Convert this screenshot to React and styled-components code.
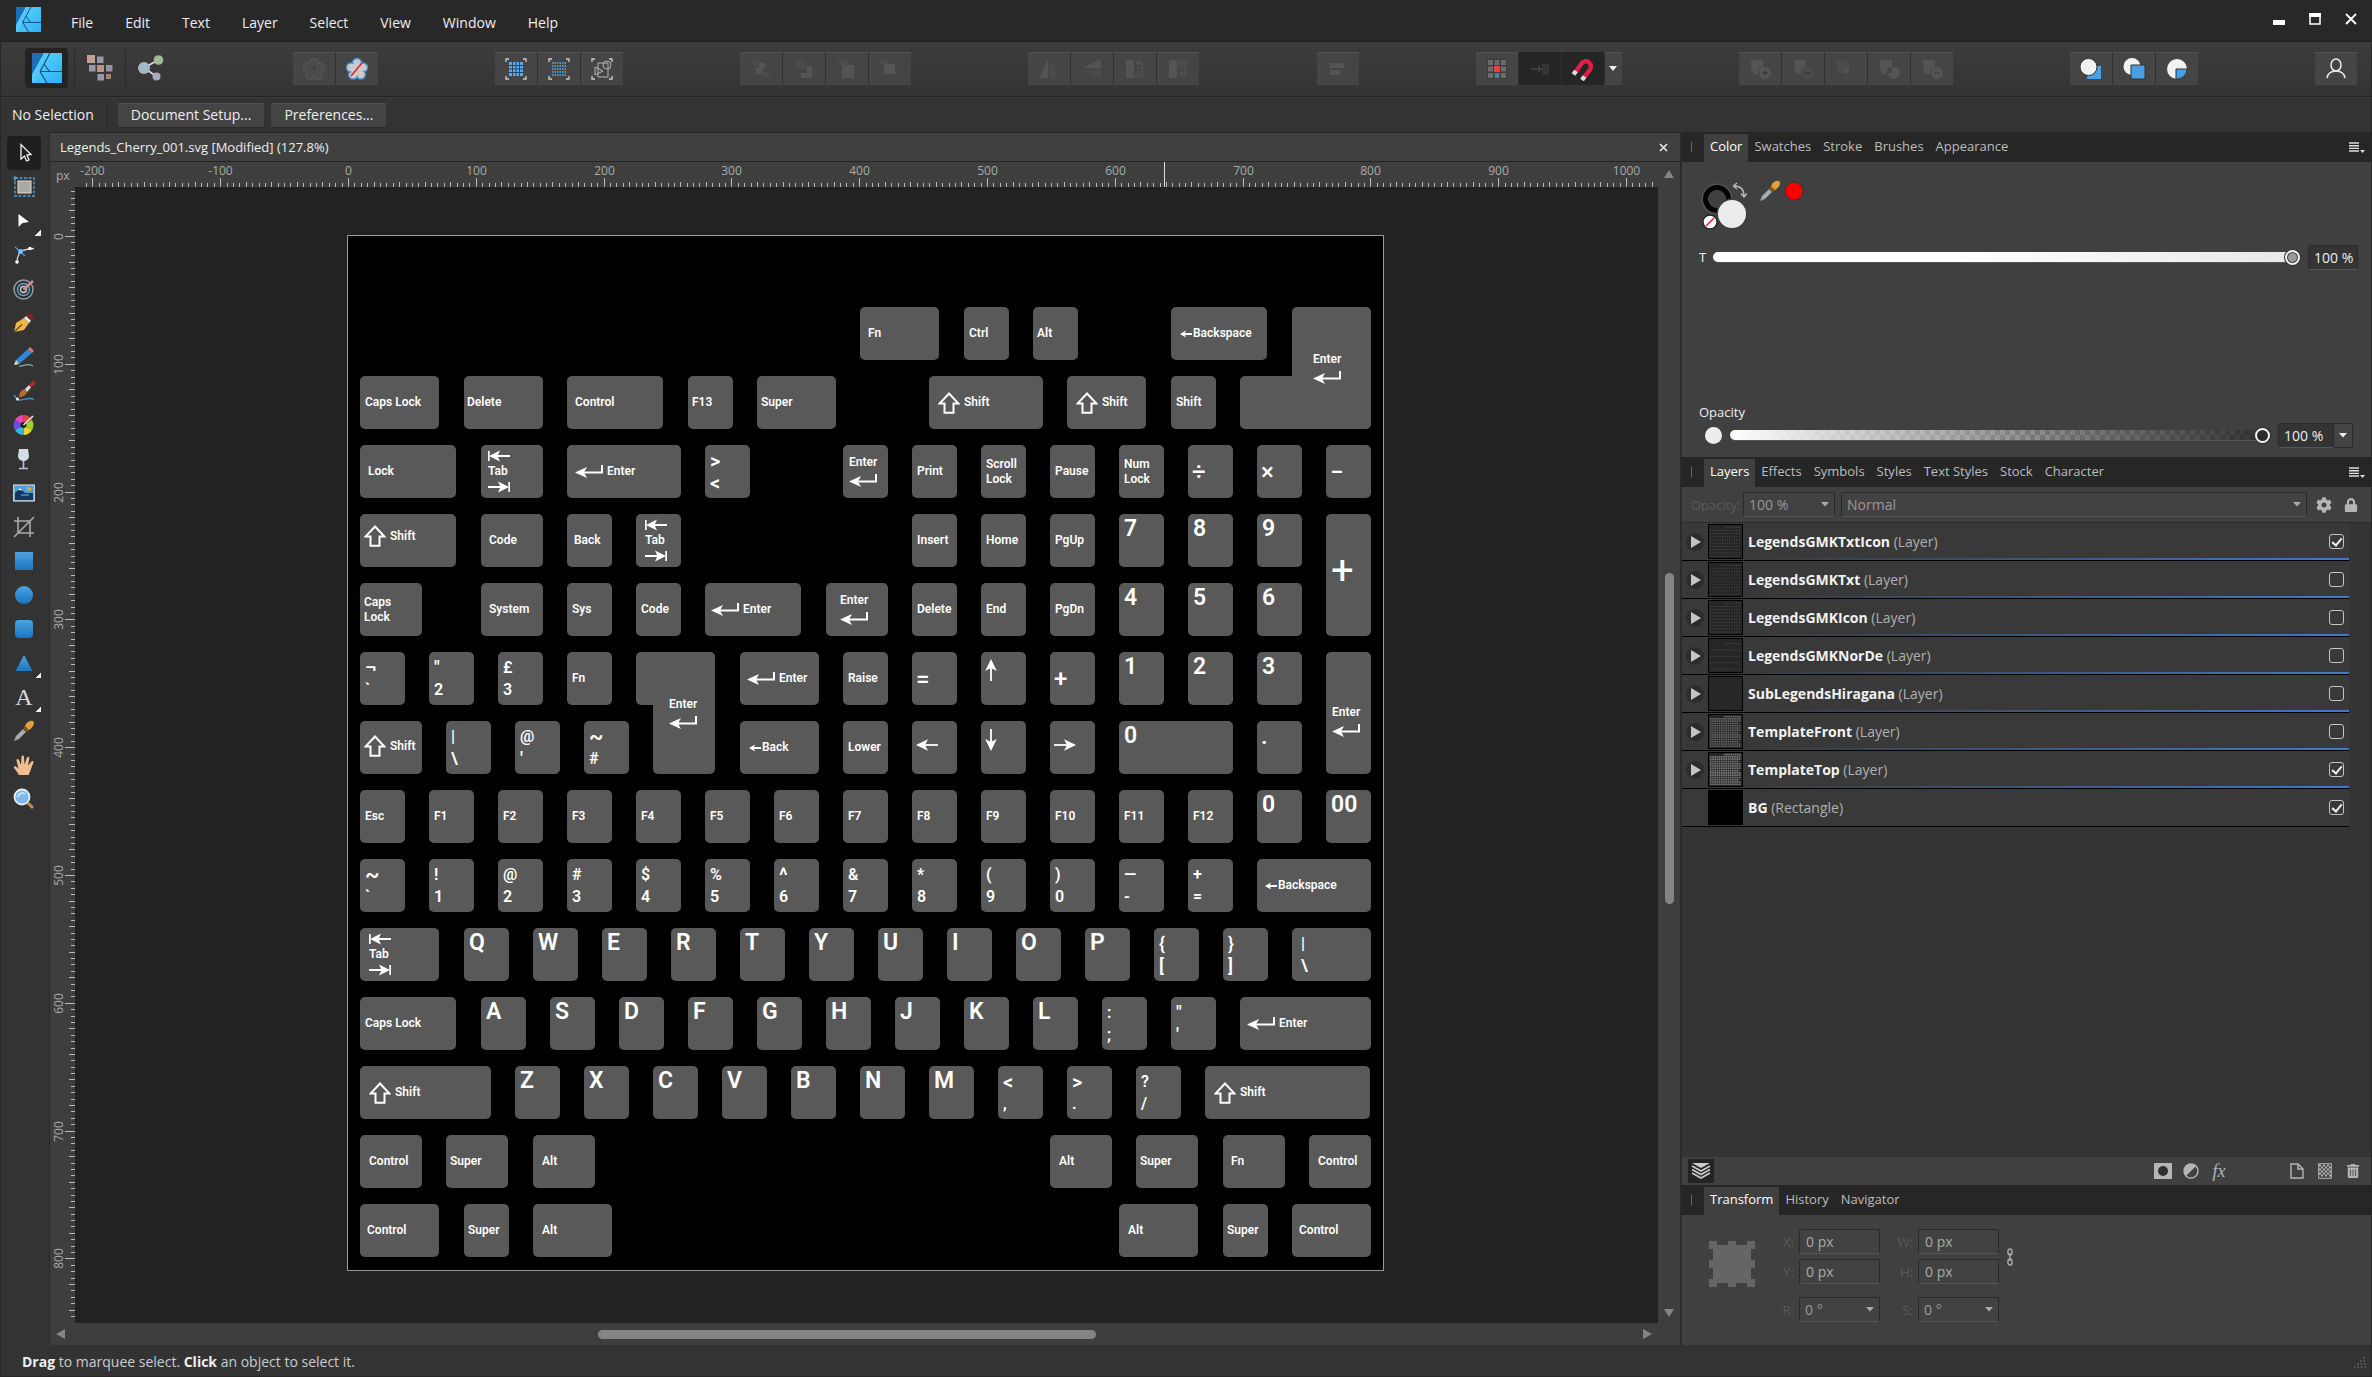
import React from "react";
import styled, { createGlobalStyle, css } from "styled-components";
import { FaCog, FaLock, FaTrashAlt } from "react-icons/fa";

/* ------------------------------------------------------------------ */
/* Base                                                                */
/* ------------------------------------------------------------------ */

const GlobalStyle = createGlobalStyle`
  * { box-sizing: border-box; }
  body {
    margin: 0;
    background: #333;
    color: #eee;
    font: 14px/20px "Open Sans", "Noto Sans", sans-serif;
  }
  button, input, select { font: inherit; color: inherit; }
  button { border: 0; padding: 0; background: none; }
  svg { display: block; flex: none; }
`;

const Shell = styled.div`
  height: 100vh;
  display: flex;
  flex-direction: column;
  border-left: 1px solid #272727;
  border-right: 1px solid #272727;
`;

/* ------------------------------------------------------------------ */
/* Title bar                                                           */
/* ------------------------------------------------------------------ */

const TitleBar = styled.header`
  height: 42px;
  flex: none;
  display: flex;
  align-items: center;
  padding: 0 12px 2px 15px;
  background: #282828;
  border-bottom: 1px solid #202020;
`;

const MenuBar = styled.nav`
  display: flex;
  flex: 1;
  padding: 6px 0 0 14px;
`;

const MenuItem = styled.button`
  padding: 0 16px;
`;

const WindowControls = styled.div`
  display: flex;
  gap: 20px;
  padding-bottom: 2px;
`;

const WindowButton = styled.button`
  width: 16px;
  height: 16px;
  display: grid;
  place-items: center;
`;

/* ------------------------------------------------------------------ */
/* Tool bars                                                           */
/* ------------------------------------------------------------------ */

const Toolbar = styled.div`
  height: 55px;
  flex: none;
  display: flex;
  justify-content: space-between;
  align-items: center;
  padding: 0 14px 2px 24px;
  background: linear-gradient(#3c3c3c, #343434);
  border-bottom: 1px solid #242424;
`;

const Personas = styled.div`
  display: flex;
  align-items: center;
  width: 151px;
  height: 40px;
`;

const PersonaButton = styled.button`
  width: ${(p) => (p.$active ? 43 : 38)}px;
  height: 40px;
  display: grid;
  place-items: center;
  border-radius: 4px;
  background: ${(p) => (p.$active ? "#232323" : "none")};
`;

const PersonaRule = styled.span`
  width: 1px;
  height: 38px;
  margin: 0 6px;
  background: #2a2a2a;
`;

const Group = styled.div`
  display: flex;
  gap: 1px;
  height: 33px;
  background: #303030;
`;

const GroupButton = styled.button`
  width: ${(p) => (p.$slim ? 17 : 42)}px;
  height: 33px;
  display: grid;
  place-items: center;
  background: ${(p) => (p.$dark ? "#252525" : "#454545")};
  border-top: 1px solid ${(p) => (p.$dark ? "#222" : "#525252")};
`;

const ContextBar = styled.div`
  height: 35px;
  flex: none;
  display: flex;
  align-items: center;
  padding: 0 11px;
  border-top: 1px solid #3a3a3a;
`;

const ContextRule = styled.span`
  width: 1px;
  height: 26px;
  margin: 0 10px 0 13px;
  background: #262626;
`;

const ContextButton = styled.button`
  height: 25px;
  padding: 0 13px;
  margin-right: 7px;
  background: #444;
  border-top: 1px solid #525252;
  border-bottom: 1px solid #2c2c2c;
  border-radius: 2px;
`;

/* ------------------------------------------------------------------ */
/* Work area                                                           */
/* ------------------------------------------------------------------ */

const Main = styled.main`
  flex: 1;
  min-height: 0;
  display: flex;
`;

const Tools = styled.aside`
  width: 48px;
  flex: none;
  display: flex;
  flex-direction: column;
  align-items: center;
  padding: 4px 2px 0 0;
`;

const ToolButton = styled.button`
  position: relative;
  width: 34px;
  height: 34px;
  display: grid;
  place-items: center;
  border-radius: 4px;
  background: ${(p) => (p.$active ? "#1f1f1f" : "none")};
`;

const FlyoutMark = styled.span`
  position: absolute;
  right: 0;
  bottom: 2px;
  width: 6px;
  height: 6px;
  background: linear-gradient(to bottom right, transparent 50%, #eee 50%);
`;

const Document = styled.section`
  flex: 1;
  min-width: 0;
  display: flex;
  flex-direction: column;
  border-left: 1px solid #2a2a2a;
`;

const DocTab = styled.div`
  height: 30px;
  flex: none;
  display: flex;
  align-items: center;
  justify-content: space-between;
  padding: 0 12px 0 10px;
  font-size: 13px;
  background: #404040;
  border-top: 1px solid #242424;
  border-bottom: 1px solid #242424;
`;

const Viewport = styled.div`
  flex: 1;
  min-height: 0;
  display: grid;
  grid-template: 25px minmax(0, 1fr) 22px / 25px minmax(0, 1fr) 22px;
  background: #3e3e3e;
`;

const RulerUnit = styled.div`
  font-size: 12px;
  line-height: 16px;
  padding: 6px 0 0 6px;
  color: #aaa;
`;

const RulerSvg = styled.svg`
  width: 100%;
  height: 100%;
  overflow: visible;
  font: 12px "Open Sans", sans-serif;
`;

const VScroll = styled.div`
  grid-column: 3;
  grid-row: 1 / 3;
  display: flex;
  flex-direction: column;
  align-items: center;
  padding: 8px 0 6px;
`;

const HScroll = styled.div`
  grid-column: 1 / 4;
  grid-row: 3;
  display: flex;
  align-items: center;
  padding: 0 28px 0 6px;
`;

const ScrollSpace = styled.span`
  flex: ${(p) => p.$grow} 1 0;
`;

const ScrollThumb = styled.span`
  flex: ${(p) => p.$grow} 1 0;
  border-radius: 5px;
  background: #858585;
  ${(p) => (p.$horizontal ? "height: 9px;" : "width: 9px;")}
`;

const Canvas = styled.div`
  display: flex;
  justify-content: center;
  align-items: center;
  overflow: hidden;
  padding: 0 2px 4px 0;
  background: #222;
`;

const Artboard = styled.div`
  position: relative;
  width: 1037px;
  height: 1036px;
  flex: none;
  background: #000;
  border: 1px solid #999;
`;

/* ------------------------------------------------------------------ */
/* Key caps                                                            */
/* ------------------------------------------------------------------ */

const Cap = styled.div`
  position: absolute;
  display: flex;
  flex-direction: ${(p) => (p.$row ? "row" : "column")};
  ${(p) => (p.$row ? "align-items: center;" : "align-items: flex-start; justify-content: center;")}
  gap: ${(p) => p.$gap || 0}px;
  border-radius: 5px;
  background: #595959;
  color: #fff;
  white-space: nowrap;
  font: 600 12px/15px Roboto, "Liberation Sans", sans-serif;
`;

const BigLegend = styled.span`
  align-self: flex-start;
  margin-bottom: auto;
  padding-top: 2px;
  font-size: 23px;
  line-height: 26px;
`;

const PairLegend = styled.span`
  font-size: ${(p) => p.$size}px;
  line-height: 22px;
`;

const SymbolLegend = styled.span`
  font-size: ${(p) => (p.$huge ? 40 : 24)}px;
  line-height: 28px;
  font-weight: ${(p) => (p.$huge ? 400 : 500)};
`;

const EnterArrow = () => (
  <svg width="28" height="14" viewBox="0 0 28 14">
    <path d="M27 0V7.5H8" fill="none" stroke="#fff" strokeWidth="2" />
    <path d="M0 7.5L12 2L9 7.5L12 13Z" fill="#fff" />
  </svg>
);

const TabArrow = ({ right }) => (
  <svg width="22" height="12" viewBox="0 0 22 12">
    <g transform={right ? "rotate(180 11 6)" : undefined}>
      <path d="M0.8 1V11M22 6H8" stroke="#fff" strokeWidth="1.8" />
      <path d="M1 6L12 0.5L9.5 6L12 11.5Z" fill="#fff" />
    </g>
  </svg>
);

const ShiftArrow = () => (
  <svg width="22" height="22" viewBox="0 0 22 22">
    <path d="M11 1.5L20.5 11.5H15.5V20.8H6.5V11.5H1.5Z" fill="none" stroke="#fff" strokeWidth="2" />
  </svg>
);

const SmallArrow = () => (
  <svg width="12" height="8" viewBox="0 0 12 8">
    <path d="M12 4H3" stroke="#fff" strokeWidth="2" />
    <path d="M0 4L6 0.5L4.6 4L6 7.5Z" fill="#fff" />
  </svg>
);

const CursorArrow = ({ turn }) => {
  const upright = turn % 180 !== 0;
  return (
    <svg width={upright ? 12 : 22} height="22" viewBox={upright ? "5 0 12 22" : "0 0 22 22"}>
      <g transform={`rotate(${turn} 11 11)`}>
        <path d="M22 11H8" stroke="#fff" strokeWidth="1.8" />
        <path d="M0 11L12 5.2L9 11L12 16.8Z" fill="#fff" />
      </g>
    </svg>
  );
};

const pairSizes = { "~": 22, "¬": 22, "^": 20, "<": 20, ">": 20, "{": 18, "}": 18, "[": 18, "]": 18, "\"": 18, "'": 18 };

const Legend = ({ kind, text }) => {
  const lines = text ? text.split(" / ") : [];
  switch (kind) {
    case "word":
      return lines.map((t) => <span key={t}>{t}</span>);
    case "big":
      return <BigLegend>{text}</BigLegend>;
    case "pair":
      return lines.map((t, i) => (
        <PairLegend key={i} $size={pairSizes[t] || 16}>{t}</PairLegend>
      ));
    case "symbol":
      return <SymbolLegend>{text}</SymbolLegend>;
    case "huge":
      return <SymbolLegend $huge>{text}</SymbolLegend>;
    case "enter":
      return (<><EnterArrow /><span>Enter</span></>);
    case "enterStack":
      return (<><span>Enter</span><EnterArrow /></>);
    case "tab":
      return (<><TabArrow /><span>Tab</span><TabArrow right /></>);
    case "shift":
      return (<><ShiftArrow /><span>Shift</span></>);
    case "back":
      return (<><SmallArrow /><span>{text}</span></>);
    case "cursor":
      return <CursorArrow turn={Number(text)} />;
    default:
      return null;
  }
};

const inRow = { enter: 4, shift: 4, back: 1 };
const stackGap = { enterStack: 4, tab: 2 };
const defaultPad = { big: 5, pair: 5, symbol: 4, huge: 5, cursor: 4, enterStack: 6, tab: 7, shift: 4, word: 5 };

const PITCH = 69;
const span = (units, trim) => Math.round(units * PITCH - trim);

const Key = ({ c, r, w = 1, h = 1, kind, text, pad, top = 0 }) => (
  <Cap
    $row={kind in inRow}
    $gap={inRow[kind] || stackGap[kind]}
    style={{
      left: span(c, -12),
      top: span(r, -71),
      width: span(w, 24.5),
      height: span(h, 16),
      paddingLeft: pad ?? defaultPad[kind],
      paddingTop: Math.max(top, 0),
      paddingBottom: Math.max(-top, 0),
    }}
  >
    <Legend kind={kind} text={text} />
  </Cap>
);

const k = (r, c, w, kind, text, extra) => ({ r, c, w, kind, text, ...extra });
const run = (r, c, kind, items) => items.map((text, i) => k(r, c + i, 1, kind, text));

const KEYS = [
  k(0, 7.25, 1.5, "word", "Fn", { pad: 8 }),
  k(0, 8.75, 1, "word", "Ctrl"),
  k(0, 9.75, 1, "word", "Alt", { pad: 4 }),
  k(0, 11.75, 1.75, "back", "Backspace", { pad: 9 }),
  k(1, 12.75, 2.25),
  k(0, 13.5, 1.5, "enterStack", "", { h: 2, pad: 21 }),

  k(1, 0, 1.5, "word", "Caps Lock"),
  k(1, 1.5, 1.5, "word", "Delete", { pad: 3 }),
  k(1, 3, 1.75, "word", "Control", { pad: 8 }),
  k(1, 4.75, 1, "word", "F13", { pad: 4 }),
  k(1, 5.75, 1.5, "word", "Super", { pad: 4 }),
  k(1, 8.25, 2, "shift", "", { pad: 9 }),
  k(1, 10.25, 1.5, "shift", "", { pad: 9 }),
  k(1, 11.75, 1, "word", "Shift"),

  k(2, 0, 1.75, "word", "Lock", { pad: 8 }),
  k(2, 1.75, 1.25, "tab"),
  k(2, 3, 2, "enter", "", { pad: 8 }),
  k(2, 5, 1, "pair", "> / <"),
  k(2, 7, 1, "enterStack"),
  ...run(2, 8, "word", ["Print", "Scroll / Lock", "Pause", "Num / Lock"]),
  ...run(2, 12, "symbol", ["÷", "×", "−"]),

  k(3, 0, 1.75, "shift", "", { top: -9 }),
  k(3, 1.75, 1.25, "word", "Code", { pad: 8 }),
  k(3, 3, 1, "word", "Back", { pad: 7 }),
  k(3, 4, 1, "tab", "", { pad: 9 }),
  ...run(3, 8, "word", ["Insert", "Home", "PgUp"]),
  ...run(3, 11, "big", ["7", "8", "9"]),
  k(3, 14, 1, "huge", "+", { h: 2, top: -8 }),

  k(4, 0, 1.25, "word", "Caps / Lock", { pad: 4 }),
  k(4, 1.75, 1.25, "word", "System", { pad: 8 }),
  k(4, 3, 1, "word", "Sys"),
  k(4, 4, 1, "word", "Code"),
  k(4, 5, 1.75, "enter", "", { pad: 6 }),
  k(4, 6.75, 1.25, "enterStack", "", { pad: 14 }),
  ...run(4, 8, "word", ["Delete", "End", "PgDn"]),
  ...run(4, 11, "big", ["4", "5", "6"]),

  ...run(5, 0, "pair", ["¬ / `", "\" / 2", "£ / 3"]),
  k(5, 3, 1, "word", "Fn"),
  k(5, 4, 1.5),
  k(5, 4.25, 1.25, "enterStack", "", { h: 2, pad: 16 }),
  k(5, 5.5, 1.5, "enter", "", { pad: 7 }),
  k(5, 7, 1, "word", "Raise"),
  k(5, 8, 1, "symbol", "="),
  k(5, 9, 1, "cursor", "90", { top: -18 }),
  k(5, 10, 1, "symbol", "+"),
  ...run(5, 11, "big", ["1", "2", "3"]),
  k(5, 14, 1, "enterStack", "", { h: 2, top: 16 }),

  k(6, 0, 1.25, "shift", "", { top: -3 }),
  ...run(6, 1.25, "pair", ["| / \\", "@ / '", "~ / #"]),
  k(6, 5.5, 1.5, "back", "Back", { pad: 9 }),
  k(6, 7, 1, "word", "Lower"),
  k(6, 8, 1, "cursor", "0", { top: -6 }),
  k(6, 9, 1, "cursor", "270", { top: -16 }),
  k(6, 10, 1, "cursor", "180", { top: -6 }),
  k(6, 11, 2, "big", "0"),
  k(6, 13, 1, "symbol", ".", { top: -24 }),

  ...run(7, 0, "word", ["Esc", "F1", "F2", "F3", "F4", "F5", "F6", "F7", "F8", "F9", "F10", "F11", "F12"]),
  ...run(7, 13, "big", ["0", "00"]),

  ...run(8, 0, "pair", ["~ / `", "! / 1", "@ / 2", "# / 3", "$ / 4", "% / 5", "^ / 6", "& / 7", "* / 8", "( / 9", ") / 0", "— / -", "+ / ="]),
  k(8, 13, 2, "back", "Backspace", { pad: 8 }),

  k(9, 0, 1.5, "tab", "", { pad: 9 }),
  ...run(9, 1.5, "big", ["Q", "W", "E", "R", "T", "Y", "U", "I", "O", "P"]),
  ...run(9, 11.5, "pair", ["{ / [", "} / ]"]),
  k(9, 13.5, 1.5, "pair", "| / \\", { pad: 9 }),

  k(10, 0, 1.75, "word", "Caps Lock"),
  ...run(10, 1.75, "big", ["A", "S", "D", "F", "G", "H", "J", "K", "L"]),
  ...run(10, 10.75, "pair", [": / ;", "\" / '"]),
  k(10, 12.75, 2.25, "enter", "", { pad: 7 }),

  k(11, 0, 2.25, "shift", "", { pad: 9 }),
  ...run(11, 2.25, "big", ["Z", "X", "C", "V", "B", "N", "M"]),
  ...run(11, 9.25, "pair", ["< / ,", "> / .", "? / /"]),
  k(11, 12.25, 2.75, "shift", "", { pad: 9 }),

  k(12, 0, 1.25, "word", "Control", { pad: 9 }),
  k(12, 1.25, 1.25, "word", "Super", { pad: 4 }),
  k(12, 2.5, 1.25, "word", "Alt", { pad: 9 }),
  k(12, 10, 1.25, "word", "Alt", { pad: 9 }),
  k(12, 11.25, 1.25, "word", "Super", { pad: 4 }),
  k(12, 12.5, 1.25, "word", "Fn", { pad: 8 }),
  k(12, 13.75, 1.25, "word", "Control", { pad: 9 }),

  k(13, 0, 1.5, "word", "Control", { pad: 7 }),
  k(13, 1.5, 1, "word", "Super", { pad: 4 }),
  k(13, 2.5, 1.5, "word", "Alt", { pad: 9 }),
  k(13, 11, 1.5, "word", "Alt", { pad: 9 }),
  k(13, 12.5, 1, "word", "Super", { pad: 4 }),
  k(13, 13.5, 1.5, "word", "Control", { pad: 7 }),
];

/* ------------------------------------------------------------------ */
/* Rulers                                                              */
/* ------------------------------------------------------------------ */

const ZOOM = 1.278;

const ticks = (from, to, origin) => {
  const out = [];
  for (let u = from; u <= to; u += 5) {
    const kind = u % 100 === 0 ? 2 : u % 20 === 0 ? 1 : 0;
    out.push({ u, kind, at: Math.round(origin + u * ZOOM) + 0.5 });
  }
  return out;
};

const TopRuler = () => (
  <RulerSvg aria-label="Horizontal ruler">
    <g stroke="#bbb" strokeWidth="1">
      {ticks(-205, 1020, 273).map((t) => (
        <line key={t.u} x1={t.at} x2={t.at} y1={[21, 20, 16][t.kind]} y2="25" />
      ))}
      <line x1="1089.5" x2="1089.5" y1="0" y2="25" stroke="#ddd" />
    </g>
    <g fill="#aaa" textAnchor="middle">
      {ticks(-205, 1020, 273).filter((t) => t.kind === 2).map((t) => (
        <text key={t.u} x={t.at} y="13">{t.u}</text>
      ))}
    </g>
  </RulerSvg>
);

const LeftRuler = () => (
  <RulerSvg aria-label="Vertical ruler">
    <g stroke="#bbb" strokeWidth="1">
      {ticks(-35, 845, 49).map((t) => (
        <line key={t.u} y1={t.at} y2={t.at} x1={[21, 19, 15][t.kind]} x2="25" />
      ))}
    </g>
    <g fill="#aaa" textAnchor="middle">
      {ticks(-35, 845, 49).filter((t) => t.kind === 2).map((t) => (
        <text key={t.u} transform={`translate(13 ${t.at}) rotate(-90)`}>{t.u}</text>
      ))}
    </g>
  </RulerSvg>
);

/* ------------------------------------------------------------------ */
/* Icons                                                               */
/* ------------------------------------------------------------------ */

const Logo = ({ size }) => (
  <svg width={size} height={size} viewBox="0 0 30 30">
    <defs>
      <linearGradient id="logo" x1="0" y1="0" x2="1" y2="1">
        <stop offset="0" stopColor="#62d6ff" />
        <stop offset="1" stopColor="#2cb0f4" />
      </linearGradient>
      <linearGradient id="shape" x1="0" y1="0" x2="0" y2="1">
        <stop offset="0" stopColor="#4ba3e3" />
        <stop offset="1" stopColor="#1c76c0" />
      </linearGradient>
    </defs>
    <rect width="30" height="30" fill="url(#logo)" />
    <path d="M0 0H12L0 22Z" fill="#1d6fb8" />
    <path d="M12 0H17L1 30H0V22Z" fill="#55c8fb" />
    <path d="M8 18.500H30M8 18.500L15 30M12 11L17.500 18.500M18 0L8 18.500" fill="none" stroke="#12507c" strokeWidth="1.2" />
  </svg>
);

const PixelPersona = () => (
  <svg width="26" height="26" viewBox="0 0 26 26">
    <rect x="0" y="0" width="8" height="8" fill="#bfa096" />
    <rect x="10" y="1.5" width="6.5" height="6.5" fill="#9a99ac" />
    <rect x="2" y="10" width="6.5" height="6.5" fill="#9a99ac" />
    <rect x="10" y="10" width="7" height="7" fill="#bd9389" />
    <rect x="19" y="10" width="6.5" height="6.5" fill="#9392a4" />
    <rect x="10.5" y="19" width="6.5" height="6.5" fill="#9a99ac" />
    <rect x="19" y="19" width="5" height="5" fill="#a97f78" />
  </svg>
);

const ExportPersona = () => (
  <svg width="26" height="26" viewBox="0 0 26 26">
    <path d="M6 13L20 5M6 13L18 21" stroke="#ddd" strokeWidth="1.6" />
    <circle cx="6" cy="13" r="6" fill="#a3b8c4" />
    <circle cx="20.5" cy="5" r="4.8" fill="#a5b890" />
    <circle cx="18.5" cy="21.5" r="4" fill="#aca9bd" />
  </svg>
);

const Flower = ({ fill, stroke }) => (
  <g fill={fill} stroke={stroke} strokeWidth="1.4">
    <circle cx="12" cy="6" r="4.5" />
    <circle cx="18" cy="10.5" r="4.5" />
    <circle cx="15.8" cy="17.5" r="4.5" />
    <circle cx="8.2" cy="17.5" r="4.5" />
    <circle cx="6" cy="10.5" r="4.5" />
    <circle cx="12" cy="12" r="6.5" stroke="none" />
  </g>
);

const Svg24 = ({ children }) => (
  <svg width="24" height="24" viewBox="0 0 24 24" fill="none">{children}</svg>
);

const corners = <path d="M2 5V2H5M19 2H22V5M22 19V22H19M5 22H2V19" stroke="#ccc" strokeWidth="1.3" />;

const DIM = "#545454";
const DIMMER = "#4b4b4b";

const toolbarGroups = [
  [
    { label: "Assistant", icon: <Svg24><Flower fill={DIMMER} stroke={DIM} /><path d="M12 8V16M9 12H15" stroke="#3c3c3c" /></Svg24> },
    { label: "Colour management", icon: <Svg24><Flower fill="#cacacc" stroke="#4a90d0" /><path d="M6 19L17 6" stroke="#e0242c" strokeWidth="1.6" /></Svg24> },
  ],
  [
    { label: "Grid", icon: <Svg24>{corners}<rect x="5" y="5" width="14" height="14" fill="#5aa9ea" /><path d="M8.5 5V19M12 5V19M15.5 5V19M5 8.5H19M5 12H19M5 15.5H19" stroke="#2a4560" /></Svg24> },
    { label: "Pixel grid", icon: <Svg24>{corners}<path d="M5 6H19M5 9H19M5 12H19M5 15H19M5 18H19" stroke="#5aa9ea" strokeWidth="1.6" strokeDasharray="1.5 1" /></Svg24> },
    { label: "Outline view", icon: <Svg24>{corners}<path d="M8 6H18V20H8ZM5 10L13 14L5 18Z" stroke="#b5b5b5" /><circle cx="17" cy="8" r="4" stroke="#b5b5b5" /></Svg24> },
  ],
  [
    { label: "Move to back", icon: <Svg24><path d="M4 3H10V9H4ZM14 15H20V21H14Z" fill={DIMMER} /><path d="M10 6H16V12H13V17H7V11H10Z" fill={DIM} /></Svg24> },
    { label: "Move back one", icon: <Svg24><path d="M3 3H14V12H3Z" fill={DIMMER} /><path d="M15 9H20V21H9V16H15Z" fill={DIM} /></Svg24> },
    { label: "Move forward one", icon: <Svg24><path d="M3 3H12V8H3Z" fill={DIMMER} /><path d="M7 8H19V21H7Z" fill={DIM} /></Svg24> },
    { label: "Move to front", icon: <Svg24><path d="M3 3H10V7H3Z" fill={DIMMER} /><path d="M6 7H17V17H6Z" fill={DIM} /></Svg24> },
  ],
  [
    { label: "Flip horizontal", icon: <Svg24><path d="M11 3V21H2Z" fill={DIM} /><path d="M13 3V21H21Z" fill={DIMMER} /></Svg24> },
    { label: "Flip vertical", icon: <Svg24><path d="M21 2V11H3Z" fill={DIM} /><path d="M21 21V13H3Z" fill={DIMMER} /></Svg24> },
    { label: "Rotate anticlockwise", icon: <Svg24><path d="M3 3H11V21H3Z" fill={DIM} /><path d="M12 14H21V21H12Z" fill={DIMMER} /><path d="M19 12V6H14M16 4L14 6L16 8" stroke={DIM} strokeWidth="1.5" /></Svg24> },
    { label: "Rotate clockwise", icon: <Svg24><path d="M3 3H11V21H3Z" fill={DIM} /><path d="M12 3H21V10H12Z" fill={DIMMER} /><path d="M19 11V17H14M16 15L14 17L16 19" stroke={DIM} strokeWidth="1.5" /></Svg24> },
  ],
  [{ label: "Align", icon: <Svg24><path d="M4 6H18V11H4ZM4 13H14V18H4Z" fill={DIM} /></Svg24> }],
  [
    { label: "Snapping grid", icon: <Svg24><path d="M2 2H22V22H2Z" fill="#3b3b3b" /><path d="M3 3H8V8H3ZM9.500 3H14.500V8H9.500ZM16 3H21V8H16ZM3 9.500H8V14.500H3ZM16 9.500H21V14.500H16ZM3 16H8V21H3ZM9.500 16H14.500V21H9.500ZM16 16H21V21H16Z" fill="#6c6c6c" /><rect x="9" y="9" width="6" height="6" fill="#e8413c" /><rect x="10.5" y="17" width="3" height="3" fill="#4a84b8" /></Svg24> },
    { label: "Force pixel alignment", dark: true, icon: <Svg24><path d="M3 12H15M11 9V15" stroke="#484848" strokeWidth="1.5" /><path d="M14 7H21V18H14Z" fill="#343434" /></Svg24> },
    { label: "Snapping", dark: true, icon: <Svg24><path d="M4.500 15L10.500 6.500A5 5 0 0 1 19 12.500L13 20.500" stroke="#e01f48" strokeWidth="4.500" /><path d="M2.500 17.500L5 14M11 23L13.500 19.500" stroke="#ddd" strokeWidth="4.500" /></Svg24> },
    { label: "Snapping options", slim: true, icon: <svg width="8" height="5"><path d="M0 0H8L4 5Z" fill="#eee" /></svg> },
  ],
  [
    { label: "Add", icon: <Svg24><path d="M3 3H15V10A7 7 0 0 0 10 17H6L3 12Z" fill={DIM} /><circle cx="17" cy="16" r="6" fill={DIM} /><path d="M17 13V19M14 16H20" stroke="#333" /></Svg24> },
    { label: "Subtract", icon: <Svg24><path d="M3 3H15V10A7 7 0 0 0 10 17H6L3 12Z" fill={DIM} /><circle cx="17" cy="16" r="6" fill={DIMMER} /><path d="M14 16H20" stroke="#333" /></Svg24> },
    { label: "Intersect", icon: <Svg24><path d="M3 3H15V16H3Z" fill={DIMMER} /><path d="M15 10V16H10A6 6 0 0 1 15 10Z" fill={DIM} /><circle cx="17" cy="16" r="6" stroke={DIMMER} /></Svg24> },
    { label: "Divide", icon: <Svg24><path d="M3 3H15V10A7 7 0 0 0 10 17H6L3 12Z" fill={DIM} /><circle cx="17" cy="16" r="6" fill={DIM} /><path d="M15 10V16H10A6 6 0 0 1 15 10Z" fill="#444" /></Svg24> },
    { label: "Combine", icon: <Svg24><path d="M3 3H15V10A7 7 0 0 0 10 17H6L3 12Z" fill={DIM} /><circle cx="17" cy="16" r="6" fill={DIM} /><path d="M14 16H20" stroke="#3a3a3a" /></Svg24> },
  ],
  [
    { label: "Insert behind", icon: <Svg24><path d="M10 9H22V22H8Z" fill="#4a9fe3" /><circle cx="9.5" cy="10" r="8.5" fill="#f2f2f2" stroke="#333" /></Svg24> },
    { label: "Insert at top", icon: <Svg24><circle cx="10" cy="9.5" r="8.5" fill="#f2f2f2" /><path d="M9 8H23V22H9Z" fill="#4a9fe3" stroke="#333" /></Svg24> },
    { label: "Insert inside", icon: <Svg24><circle cx="12" cy="12" r="10" fill="#f2f2f2" /><path d="M11 12H22A10 10 0 0 1 11 22Z" fill="#4a9fe3" stroke="#333" /></Svg24> },
  ],
  [{ label: "Account", icon: <Svg24><ellipse cx="12" cy="8" rx="5" ry="6" stroke="#eee" strokeWidth="1.5" /><path d="M3 21C4 16 8 14 12 14S20 16 21 21" stroke="#eee" strokeWidth="1.5" /></Svg24> }],
];

const T = ({ children }) => (
  <svg width="22" height="22" viewBox="0 0 22 22" fill="none">{children}</svg>
);

const Dropper = () => (
  <T>
    <path d="M1 21L3 16L10 9L13 12L6 19Z" fill="#a5abb0" stroke="#62686c" strokeWidth="0.6" />
    <path d="M10 8L14 12L16 10L12 6Z" fill="#8a5a14" />
    <path d="M12 6C14 1 19 0 20.500 1.500S20 8 16 10Z" fill="#e0a03a" />
  </T>
);

const TOOLS = [
  ["Move tool", <T><path d="M8 2.500V17L11.500 14L13.500 19L16 18L14 13L18 12.500Z" fill="#1f1f1f" stroke="#eee" strokeWidth="1.3" /></T>],
  ["Artboard tool", <T><rect x="2" y="2" width="19" height="18" stroke="#4f9fdb" strokeWidth="1.4" strokeDasharray="3 1.5" /><path d="M0 2H5M2 0V5" stroke="#4f9fdb" strokeWidth="1.2" /><rect x="5" y="5" width="13" height="12" fill="#a9a9a4" stroke="#ddd" /></T>],
  ["Node tool", <T><path d="M5.500 4V17L9.500 13L16 12Z" fill="#fff" /></T>, true],
  ["Corner tool", <T><path d="M4 19C4 9 8 5 21 4.500" stroke="#ddd" strokeWidth="1.3" /><path d="M2 3L12 12" stroke="#4f9fdb" strokeWidth="1.2" /><rect x="5.5" y="5.5" width="4" height="4" fill="#8fc6ee" stroke="#4f9fdb" /><circle cx="17" cy="4.5" r="1.8" fill="#fff" /><circle cx="4" cy="18" r="1.8" fill="#fff" /></T>],
  ["Contour tool", <T><circle cx="10.5" cy="11.5" r="9.5" stroke="#8f9ba3" strokeWidth="1.5" fill="#2a3238" /><circle cx="10.5" cy="11.5" r="6" stroke="#6d9cbd" strokeWidth="1.5" /><circle cx="10.5" cy="11.5" r="3" stroke="#ccc" strokeWidth="1.3" /><path d="M10.500 11.500L20 3" stroke="#d98a94" strokeWidth="2.4" /></T>],
  ["Pen tool", <T><path d="M1 20L3 11L11 6L16 11L11 18Z" fill="#f0b54a" /><path d="M1 20L9 12.500" stroke="#6b4310" strokeWidth="1.2" /><path d="M11 6L13 4L18 9L16 11Z" fill="#eee" /><path d="M13.500 3.500L16 1L21 6L18.500 8.500Z" fill="#8c1f22" /></T>],
  ["Pencil tool", <T><path d="M1 19L3 14L15 3L19 7L6 18Z" fill="#2f87d8" /><path d="M1 19L3 14L6 18Z" fill="#f2cf9c" /><path d="M15 3L17 1L21 5L19 7Z" fill="#e2766c" /><path d="M6 20C11 21 13 16 20 20" stroke="#9aa5ad" strokeWidth="1.1" /></T>],
  ["Vector brush tool", <T><path d="M6 17C6 11 10 9 12 9L14 12C13 16 9 17 6 17Z" fill="#b8692c" /><path d="M12 9L16 5L18 7.500L14 12Z" fill="#ddd" /><path d="M16 5L21 0L22 4L18 7.500Z" fill="#c0262b" /><path d="M1 15L5 20C10 21 13 17 21 19" stroke="#4a8ec4" strokeWidth="1.4" /><circle cx="4.5" cy="19" r="1.5" fill="#eee" /></T>],
  ["Fill tool", <T><path d="M10.500 11V1A10 10 0 0 1 19 6Z" fill="#e8463c" /><path d="M10.500 11L19 6A10 10 0 0 1 19 16Z" fill="#9bd631" /><path d="M10.500 11L19 16A10 10 0 0 1 10.500 21Z" fill="#f0d32b" /><path d="M10.500 11V21A10 10 0 0 1 2 16Z" fill="#2fb6e6" /><path d="M10.500 11L2 16A10 10 0 0 1 2 6Z" fill="#6a4ae0" /><path d="M10.500 11L2 6A10 10 0 0 1 10.500 1Z" fill="#e545c0" /><circle cx="10.5" cy="11" r="3" fill="#222" /><path d="M10.500 11L20 2" stroke="#eee" strokeWidth="1.6" /></T>],
  ["Transparency tool", <T><path d="M6 1H15L16 8C16 11 13 13 10.500 13S5 11 5 8Z" fill="#d6dbe6" /><path d="M10.500 13V20M6 20.500H15" stroke="#b8c0d0" strokeWidth="1.6" /></T>],
  ["Place image tool", <T><rect x="0.7" y="3" width="20.6" height="16" fill="#4aa0dc" stroke="#d5d5d5" strokeWidth="1.2" /><path d="M2 11L7 6L12 11H20V18H2Z" fill="#16375c" /><path d="M5 8L7 6L9.500 8.500Z" fill="#fff" /><circle cx="16" cy="7" r="2" fill="#e8a93c" /><path d="M8 13H16" stroke="#6ec1ee" /></T>],
  ["Vector crop tool", <T><path d="M5 1V17H21M1 5H17V21M1 21L21 1" stroke="#aaa" strokeWidth="1.6" /></T>],
  ["Rectangle tool", <T><rect x="2" y="2" width="18" height="18" fill="url(#shape)" /></T>],
  ["Ellipse tool", <T><circle cx="11" cy="11" r="9" fill="url(#shape)" /></T>],
  ["Rounded rectangle tool", <T><rect x="2" y="2" width="18" height="18" rx="4" fill="url(#shape)" /></T>],
  ["Triangle tool", <T><path d="M11 3L19.500 19H2.500Z" fill="url(#shape)" /></T>, true],
  ["Artistic text tool", "A", true],
  ["Colour picker tool", <Dropper />],
  ["View tool", <T><path d="M6 21C4 17 0 14 1 12.500C2 11.500 4 13 5.500 14.500L3.500 6.500C3.500 4.500 5.500 4.500 6 6L8 11L8.500 3C8.500 1 10.800 1 11 3L11.500 10.500L14 3.500C14.800 2 16.500 2.500 16.300 4.500L15 11.500L18.500 7.500C19.800 6.500 21 7.500 20.300 9C18.500 12.500 17.500 18 15.500 21Z" fill="#f2bd8e" /></T>],
  ["Zoom tool", <T><path d="M15 15L20 20" stroke="#c98a52" strokeWidth="3" /><circle cx="9" cy="9" r="7.5" fill="#7db9ec" stroke="#e6edf3" strokeWidth="1.8" /><path d="M5 9C6 5 10 4 12 6" stroke="#d3ebff" strokeWidth="1.6" /></T>],
];

const TextToolGlyph = styled.span`
  font: 24px/24px "Liberation Serif", serif;
  color: #d8d8d8;
`;

/* ------------------------------------------------------------------ */
/* Side panels                                                         */
/* ------------------------------------------------------------------ */

const Panels = styled.aside`
  width: 691px;
  flex: none;
  display: flex;
  flex-direction: column;
  border-left: 2px solid #2b2b2b;
  background: #404040;
`;

const TabStrip = styled.div`
  height: 30px;
  flex: none;
  display: flex;
  align-items: stretch;
  padding: 2px 6px 0 9px;
  background: #262626;
  font-size: 13px;
`;

const Grip = styled.span`
  width: 1px;
  height: 10px;
  margin: 8px 12px 0 0;
  background: #666;
`;

const PanelTab = styled.button`
  padding: 0 6px 4px;
  color: ${(p) => (p.$active ? "#fff" : "#bdbdbd")};
  background: ${(p) => (p.$active ? "#404040" : "none")};
`;

const PanelMenu = styled.button`
  margin-left: auto;
`;

const ColorPanel = styled.div`
  height: 295px;
  flex: none;
  display: flex;
  flex-direction: column;
  padding: 18px 13px 9px 17px;
`;

const SwatchRow = styled.div`
  display: flex;
  gap: 12px;
  height: 64px;
`;

const SwatchPair = styled.div`
  display: flex;
  gap: 4px;
`;

const SwatchButton = styled.button`
  height: 22px;
`;

const SliderRow = styled.div`
  display: flex;
  align-items: center;
  gap: 8px;
  height: 26px;
  padding-right: ${(p) => (p.$inset ? 5 : 0)}px;
`;

const TintLabel = styled.label`
  width: 6px;
  font-size: 13px;
`;

const OpacityLabel = styled.label`
  margin-top: auto;
  font-size: 13px;
`;

const thumb = css`
  appearance: none;
  width: 15px;
  height: 15px;
  border-radius: 50%;
  border: 2px solid #f4f4f4;
  box-sizing: border-box;
  background: ${(p) => (p.$checker ? "#2b2b2b" : "#999")};
  box-shadow: 0 0 0 1px #333${(p) => (p.$checker ? "" : ", inset 0 0 0 1px #333")};
`;

const Slider = styled.input`
  appearance: none;
  flex: 1;
  min-width: 0;
  height: 10px;
  margin: 0;
  border-radius: 5px;
  background: ${(p) =>
    p.$checker
      ? `linear-gradient(to right, #fff, rgba(128, 128, 128, 0.7) 55%, rgba(40, 40, 40, 0.92)),
         repeating-conic-gradient(#6a6a6a 0 25%, #b4b4b4 0 50%) 0 0 / 10px 10px`
      : "linear-gradient(to right, #fff 40%, #e8e8e8)"};
  box-shadow: 0 1px 0 #555;
  &::-webkit-slider-thumb { ${thumb} }
`;

const ValueBox = styled.input`
  width: ${(p) => p.$w}px;
  height: 25px;
  padding: 0 0 0 5px;
  border: 1px solid #2a2a2a;
  border-bottom-color: #555;
  border-radius: 2px;
  background: #343434;
  color: #eee;
`;

const Combo = styled.span`
  display: flex;
`;

const ComboButton = styled.button`
  width: 19px;
  height: 25px;
  display: grid;
  place-items: center;
  border: 1px solid #2a2a2a;
  border-left: 0;
  border-radius: 0 2px 2px 0;
  background: #444;
`;

const OpacityDot = styled.span`
  width: 17px;
  height: 17px;
  margin-left: 6px;
  border-radius: 50%;
  background: #ededed;
`;

const LayerOptions = styled.div`
  height: 36px;
  flex: none;
  display: flex;
  align-items: center;
  padding: 0 11px 0 9px;
  border-bottom: 1px solid #2c2c2c;
  color: #aaa;
`;

const DimLabel = styled.label`
  font-size: 13px;
  color: #5a5a5a;
  text-align: ${(p) => (p.$right ? "right" : "left")};
  ${(p) => p.$w && `width: ${p.$w}px;`}
`;

const SelectWrap = styled.span`
  display: grid;
  align-items: center;
  ${(p) => (p.$w ? `width: ${p.$w}px;` : "flex: 1; margin: 0 8px 0 6px;")}
  & > * { grid-area: 1 / 1; }
  & > svg { justify-self: end; margin-right: 6px; pointer-events: none; }
`;

const Select = styled.select`
  appearance: none;
  width: 100%;
  height: 25px;
  padding: 0 18px 0 5px;
  border: 1px solid #2a2a2a;
  border-bottom-color: #555;
  border-radius: 2px;
  background: #424242;
  color: #999;
`;

const Caret = () => (
  <svg width="8" height="5"><path d="M0 0H8L4 4.500Z" fill="#aaa" /></svg>
);

const IconButton = styled.button`
  display: grid;
  place-items: center;
  width: ${(p) => p.$w || 18}px;
  height: 24px;
  margin-left: ${(p) => p.$left || 0}px;
  color: #b5b5b5;
  background: ${(p) => (p.$dark ? "#242424" : "none")};
`;

const LinkButton = styled(IconButton)`
  margin-top: 16px;
`;

const LayerList = styled.ul`
  flex: 1;
  min-height: 0;
  margin: 0;
  padding: 0 22px 0 0;
  list-style: none;
  background: #343434;
`;

const LayerRow = styled.li`
  height: 38px;
  display: flex;
  align-items: center;
  padding: 0 5px 0 4px;
  border-bottom: 1px solid #000;
  background: ${(p) =>
    p.$last
      ? "#393939"
      : `linear-gradient(to right, rgba(66, 122, 200, 0) 10%, #427ac8) 0 100% / 100% 2px no-repeat, #393939`};
`;

const Disclosure = styled.button`
  width: 18px;
  height: 18px;
  display: grid;
  place-items: center;
  border-radius: 50%;
  background: #2c2c2c;
  visibility: ${(p) => (p.$hidden ? "hidden" : "visible")};
`;

const Thumb = styled.svg`
  width: 35px;
  height: 35px;
  margin: 0 5px 0 4px;
  background: ${(p) => (p.$solid ? "#000" : "#262626")};
  border: 1px solid #000;
`;

const LayerName = styled.label`
  flex: 1;
  color: #b0b0b0;
  strong { color: #f2f2f2; font-weight: 700; }
`;

const Check = styled.input`
  appearance: none;
  width: 15px;
  height: 15px;
  margin: 0;
  border: 1px solid #c5c5c5;
  border-radius: 3px;
  display: grid;
  place-items: center;
  &:checked::after {
    content: "";
    width: 4px;
    height: 8px;
    margin-bottom: 2px;
    border: solid #eee;
    border-width: 0 2px 2px 0;
    transform: rotate(40deg);
  }
`;

const LayerFooter = styled.div`
  height: 28px;
  flex: none;
  display: flex;
  align-items: center;
  padding: 0 9px 0 6px;
  color: #b5b5b5;
`;

const Push = styled.span`
  flex: 1;
`;

const FxLabel = styled.span`
  font: italic 18px/20px "Liberation Serif", serif;
`;

const TransformPanel = styled.div`
  height: 130px;
  flex: none;
  display: flex;
  align-items: flex-start;
  padding: 14px 0 0 27px;
`;

const Anchor = styled.svg`
  margin: 12px 25px 0 0;
`;

const FieldGrid = styled.div`
  display: grid;
  grid-template-columns: 14px 81px 28px 81px;
  grid-template-rows: 25px 25px 3px 25px;
  gap: 5px;
  align-items: center;
  & > :nth-child(n + 9) { grid-row: 4; }
`;

const Field = styled.input`
  width: 100%;
  height: 25px;
  padding: 0 0 0 6px;
  border: 1px solid #2a2a2a;
  border-bottom-color: #555;
  border-radius: 2px;
  background: #424242;
  color: #aaa;
`;

const StatusBar = styled.footer`
  height: 32px;
  flex: none;
  display: flex;
  align-items: center;
  justify-content: space-between;
  padding: 2px 5px 0 21px;
  border-bottom: 1px solid #272727;
  color: #ccc;
  strong { color: #eee; }
`;

const MenuGlyph = () => (
  <svg width="16" height="12" viewBox="0 0 16 12">
    <path d="M0 1H10M0 3.700H10M0 6.400H10M0 9H10" stroke="#ddd" strokeWidth="1.4" />
    <path d="M11 8H16L13.500 11Z" fill="#ddd" />
  </svg>
);

const PanelTabs = ({ tabs, menu }) => (
  <TabStrip role="tablist">
    <Grip />
    {tabs.map((t, i) => (
      <PanelTab key={t} role="tab" aria-selected={i === 0} $active={i === 0}>{t}</PanelTab>
    ))}
    {menu && <PanelMenu aria-label="Panel menu"><MenuGlyph /></PanelMenu>}
  </TabStrip>
);

const LAYERS = [
  { name: "LegendsGMKTxtIcon", on: true, ink: 0.2, rows: 10 },
  { name: "LegendsGMKTxt", ink: 0.15, rows: 10 },
  { name: "LegendsGMKIcon", ink: 0.18, rows: 10 },
  { name: "LegendsGMKNorDe", ink: 0.2, rows: 5 },
  { name: "SubLegendsHiragana", ink: 0.08, rows: 5 },
  { name: "TemplateFront", ink: 0.28, rows: 14, block: true },
  { name: "TemplateTop", on: true, ink: 0.38, rows: 14, block: true },
  { name: "BG", on: true, type: "Rectangle" },
];

const LayerThumb = ({ layer }) => (
  <Thumb $solid={!layer.rows} viewBox="0 0 33 33">
    {Array.from({ length: layer.rows || 0 }, (_, i) => {
      const y = (i + 0.7) * (32 / layer.rows);
      return (
        <line
          key={i}
          x1={i ? 1 : 15}
          x2={i % 4 === 3 ? 30 : 32}
          y1={y}
          y2={y}
          stroke="#fff"
          strokeOpacity={layer.ink}
          strokeWidth={layer.block ? 1.6 : 1}
          strokeDasharray={layer.block ? "1.6 0.6" : "1 1.4"}
        />
      );
    })}
  </Thumb>
);

const ColorSection = () => (
  <ColorPanel>
    <SwatchRow>
      <svg width="48" height="52" viewBox="0 0 48 52">
        <circle cx="18" cy="19" r="12" fill="none" stroke="#555" strokeWidth="7" />
        <circle cx="18" cy="19" r="11.5" fill="none" stroke="#000" strokeWidth="5" />
        <circle cx="33" cy="34" r="15.5" fill="#404040" />
        <circle cx="33" cy="34" r="14" fill="#ececec" />
        <circle cx="11" cy="42" r="7" fill="#fff" stroke="#222" strokeWidth="1.3" />
        <path d="M7 46L15 38" stroke="#e0242c" strokeWidth="1.6" />
        <path d="M35 6C42 6 45 10 45 16M38 3L34.500 6L38 9M42 13.500L45 17L48 13.500" fill="none" stroke="#bbb" strokeWidth="1.4" />
      </svg>
      <SwatchPair>
        <SwatchButton aria-label="Pick colour"><Dropper /></SwatchButton>
        <SwatchButton aria-label="Picked colour">
          <svg width="20" height="22" viewBox="0 0 20 22"><circle cx="9" cy="11" r="9" fill="#f00" stroke="#333" /></svg>
        </SwatchButton>
      </SwatchPair>
    </SwatchRow>
    <SliderRow>
      <TintLabel htmlFor="tint">T</TintLabel>
      <Slider id="tint" type="range" defaultValue={100} />
      <ValueBox $w={50} defaultValue="100 %" aria-label="Tint value" />
    </SliderRow>
    <OpacityLabel htmlFor="opacity">Opacity</OpacityLabel>
    <SliderRow $inset>
      <OpacityDot />
      <Slider id="opacity" type="range" defaultValue={100} $checker />
      <Combo>
        <ValueBox $w={56} defaultValue="100 %" aria-label="Opacity value" />
        <ComboButton aria-label="Opacity options"><svg width="8" height="5"><path d="M0 0H8L4 4.500Z" fill="#eee" /></svg></ComboButton>
      </Combo>
    </SliderRow>
  </ColorPanel>
);

const LayersSection = () => (
  <>
    <LayerOptions>
      <DimLabel htmlFor="layer-opacity" $w={52}>Opacity:</DimLabel>
      <SelectWrap $w={92}>
        <Select id="layer-opacity"><option>100 %</option></Select>
        <Caret />
      </SelectWrap>
      <SelectWrap>
        <Select aria-label="Blend mode"><option>Normal</option></Select>
        <Caret />
      </SelectWrap>
      <IconButton aria-label="Blend options"><FaCog size={16} /></IconButton>
      <IconButton aria-label="Lock" $left={9}><FaLock size={14} /></IconButton>
    </LayerOptions>
    <LayerList>
      {LAYERS.map((l) => (
        <LayerRow key={l.name} $last={!l.rows}>
          <Disclosure aria-label={`Expand ${l.name}`} $hidden={!l.rows}>
            <svg width="11" height="12"><path d="M1 0L11 6L1 12Z" fill="#c4c4c4" /></svg>
          </Disclosure>
          <LayerThumb layer={l} />
          <LayerName htmlFor={l.name}><strong>{l.name}</strong> ({l.type || "Layer"})</LayerName>
          <Check id={l.name} type="checkbox" defaultChecked={l.on} />
        </LayerRow>
      ))}
    </LayerList>
    <LayerFooter>
      <IconButton $w={26} $dark aria-label="Layer stack">
        <svg width="20" height="16" viewBox="0 0 20 16" fill="none" stroke="#ccc" strokeWidth="1.6">
          <path d="M1 0H19L10 5Z" fill="#ccc" stroke="none" />
          <path d="M1 3L10 8L19 3M1 6.500L10 11.500L19 6.500M1 10L10 15L19 10" />
        </svg>
      </IconButton>
      <Push />
      <IconButton aria-label="Mask">
        <svg width="18" height="16"><path d="M0 0H18V16H0Z" fill="#b5b5b5" /><circle cx="9" cy="8" r="5" fill="#303030" /></svg>
      </IconButton>
      <IconButton $left={10} aria-label="Adjustment">
        <svg width="16" height="16"><circle cx="8" cy="8" r="7" fill="none" stroke="#b5b5b5" strokeWidth="1.4" /><path d="M3 13A7 7 0 0 1 13 3Z" fill="#b5b5b5" /></svg>
      </IconButton>
      <IconButton $left={10} aria-label="Effects"><FxLabel>fx</FxLabel></IconButton>
      <IconButton $left={60} aria-label="New layer">
        <svg width="14" height="16" fill="none" stroke="#b5b5b5" strokeWidth="1.4"><path d="M1 1H8L13 6V15H1ZM8 1V6H13" /></svg>
      </IconButton>
      <IconButton $left={10} aria-label="Pixel layer">
        <svg width="14" height="16">
          <rect x="0.7" y="0.7" width="12.6" height="14.6" fill="none" stroke="#b5b5b5" />
          <path d="M1 2.500H13M1 6.500H13M1 10.500H13" stroke="#b5b5b5" strokeWidth="2" strokeDasharray="2 2" />
          <path d="M3 4.500H13M3 8.500H13M3 12.500H13" stroke="#b5b5b5" strokeWidth="2" strokeDasharray="2 2" />
        </svg>
      </IconButton>
      <IconButton $left={10} aria-label="Delete"><FaTrashAlt size={14} /></IconButton>
    </LayerFooter>
  </>
);

const TransformSection = () => (
  <TransformPanel>
    <Anchor width="46" height="46" viewBox="0 0 46 46" fill="#656565">
      <rect x="4" y="4" width="38" height="38" />
      {[0, 19, 38].map((x) => [0, 19, 38].map((y) => <rect key={`${x}-${y}`} x={x} y={y} width="8" height="8" />))}
    </Anchor>
    <FieldGrid>
      <DimLabel $right htmlFor="fx">X:</DimLabel><Field id="fx" defaultValue="0 px" />
      <DimLabel $right htmlFor="fw">W:</DimLabel><Field id="fw" defaultValue="0 px" />
      <DimLabel $right htmlFor="fy">Y:</DimLabel><Field id="fy" defaultValue="0 px" />
      <DimLabel $right htmlFor="fh">H:</DimLabel><Field id="fh" defaultValue="0 px" />
      <DimLabel $right htmlFor="fr">R:</DimLabel>
      <SelectWrap $w={81}><Select id="fr"><option>0 °</option></Select><Caret /></SelectWrap>
      <DimLabel $right htmlFor="fs">S:</DimLabel>
      <SelectWrap $w={81}><Select id="fs"><option>0 °</option></Select><Caret /></SelectWrap>
    </FieldGrid>
    <LinkButton $w={22} aria-label="Lock aspect ratio">
      <svg width="6" height="18" viewBox="0 0 6 18" fill="none" stroke="#aaa" strokeWidth="1.4">
        <rect x="1" y="1" width="4" height="6" rx="2" /><rect x="1" y="11" width="4" height="6" rx="2" /><path d="M3 5V13" />
      </svg>
    </LinkButton>
  </TransformPanel>
);

/* ------------------------------------------------------------------ */
/* App                                                                 */
/* ------------------------------------------------------------------ */

const MENUS = ["File", "Edit", "Text", "Layer", "Select", "View", "Window", "Help"];

export default function App() {
  return (
    <Shell>
      <GlobalStyle />
      <TitleBar>
        <Logo size={25} />
        <MenuBar>{MENUS.map((m) => <MenuItem key={m}>{m}</MenuItem>)}</MenuBar>
        <WindowControls>
          <WindowButton aria-label="Minimise"><svg width="12" height="12"><path d="M0 7H12V12H0Z" fill="#fff" /></svg></WindowButton>
          <WindowButton aria-label="Restore"><svg width="12" height="12"><path d="M1 1H11V11H1Z" fill="none" stroke="#fff" strokeWidth="1.5" /><path d="M0 0H12V4H0Z" fill="#fff" /></svg></WindowButton>
          <WindowButton aria-label="Close"><svg width="12" height="12"><path d="M1 1L11 11M11 1L1 11" stroke="#fff" strokeWidth="1.8" /></svg></WindowButton>
        </WindowControls>
      </TitleBar>

      <Toolbar>
        <Personas>
          <PersonaButton $active aria-label="Designer persona"><Logo size={30} /></PersonaButton>
          <PersonaRule />
          <PersonaButton aria-label="Pixel persona"><PixelPersona /></PersonaButton>
          <PersonaRule />
          <PersonaButton aria-label="Export persona"><ExportPersona /></PersonaButton>
        </Personas>
        {toolbarGroups.map((group, i) => (
          <Group key={i}>
            {group.map((b) => (
              <GroupButton key={b.label} aria-label={b.label} $dark={b.dark} $slim={b.slim}>{b.icon}</GroupButton>
            ))}
          </Group>
        ))}
      </Toolbar>

      <ContextBar>
        <span>No Selection</span>
        <ContextRule />
        <ContextButton>Document Setup...</ContextButton>
        <ContextButton>Preferences...</ContextButton>
      </ContextBar>

      <Main>
        <Tools>
          {TOOLS.map(([label, icon, flyout], i) => (
            <ToolButton key={label} aria-label={label} $active={i === 0}>
              {icon === "A" ? <TextToolGlyph>A</TextToolGlyph> : icon}
              {flyout && <FlyoutMark />}
            </ToolButton>
          ))}
        </Tools>

        <Document>
          <DocTab>
            <span>Legends_Cherry_001.svg [Modified] (127.8%)</span>
            <button aria-label="Close document">
              <svg width="9" height="9"><path d="M1 1L8 8M8 1L1 8" stroke="#eee" strokeWidth="1.5" /></svg>
            </button>
          </DocTab>
          <Viewport>
            <RulerUnit>px</RulerUnit>
            <TopRuler />
            <LeftRuler />
            <Canvas>
              <Artboard>{KEYS.map((key, i) => <Key key={i} {...key} />)}</Artboard>
            </Canvas>
            <VScroll>
              <svg width="10" height="8"><path d="M5 0L10 8H0Z" fill="#858585" /></svg>
              <ScrollSpace $grow={393} />
              <ScrollThumb $grow={330} />
              <ScrollSpace $grow={403} />
              <svg width="10" height="8"><path d="M5 8L10 0H0Z" fill="#858585" /></svg>
            </VScroll>
            <HScroll>
              <svg width="9" height="10"><path d="M0 5L9 0V10Z" fill="#858585" /></svg>
              <ScrollSpace $grow={532} />
              <ScrollThumb $grow={497} $horizontal />
              <ScrollSpace $grow={546} />
              <svg width="9" height="10"><path d="M9 5L0 0V10Z" fill="#858585" /></svg>
            </HScroll>
          </Viewport>
        </Document>

        <Panels>
          <PanelTabs tabs={["Color", "Swatches", "Stroke", "Brushes", "Appearance"]} menu />
          <ColorSection />
          <PanelTabs tabs={["Layers", "Effects", "Symbols", "Styles", "Text Styles", "Stock", "Character"]} menu />
          <LayersSection />
          <PanelTabs tabs={["Transform", "History", "Navigator"]} />
          <TransformSection />
        </Panels>
      </Main>

      <StatusBar>
        <span><strong>Drag</strong> to marquee select. <strong>Click</strong> an object to select it.</span>
        <svg width="12" height="12" fill="none" stroke="#888" strokeDasharray="1.5 2">
          <path d="M0 11H12M3 8H12M6 5H12M9 2H12" />
        </svg>
      </StatusBar>
    </Shell>
  );
}
